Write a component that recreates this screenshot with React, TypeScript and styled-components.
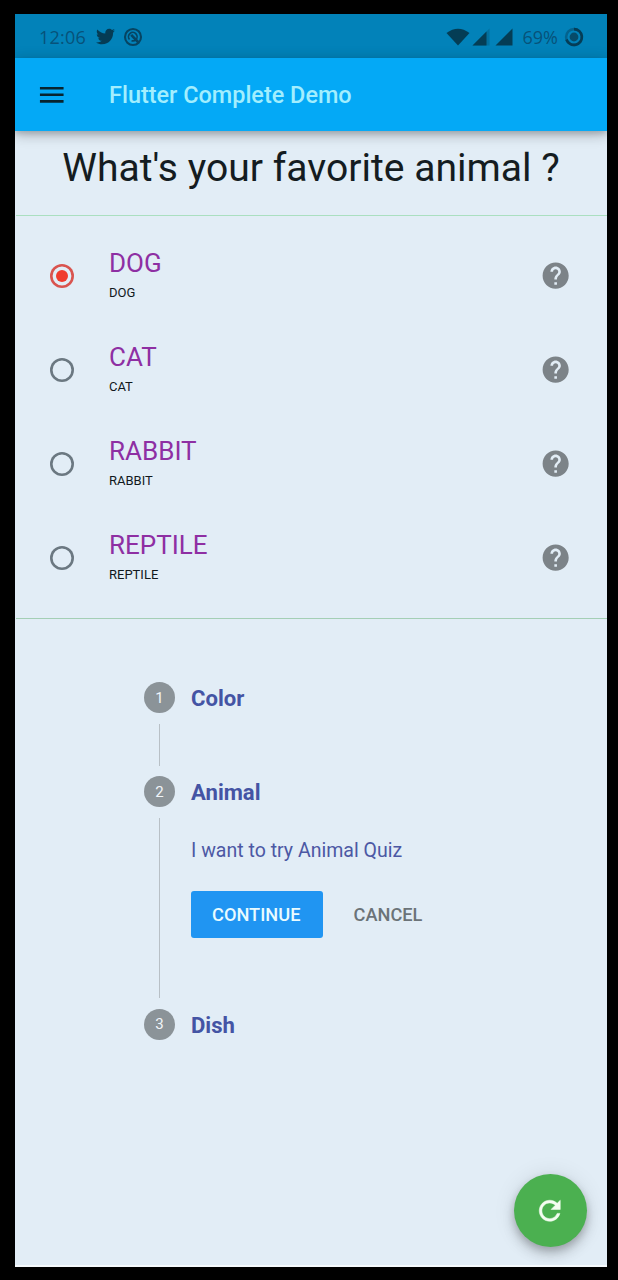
import React from "react";
import styled, { createGlobalStyle } from "styled-components";
import { MdHelp, MdMenu } from "react-icons/md";
import { FaTwitter } from "react-icons/fa";

const GlobalStyle = createGlobalStyle`
  * { box-sizing: border-box; }
  body { margin: 0; background: #000; font-family: Roboto, "Liberation Sans", sans-serif; }
`;

const Frame = styled.div`
  height: 1280px;
  width: 618px;
  padding: 14px 11px 13px 15px;
  background: #000;
`;

const Screen = styled.div`
  position: relative;
  display: flex;
  flex-direction: column;
  height: 1253px;
  background: #e2edf6;
  overflow: hidden;
  border-bottom: 2px solid #f6fafd;
`;

const StatusBar = styled.div`
  display: flex;
  align-items: center;
  justify-content: space-between;
  flex: none;
  height: 44px;
  padding: 1px 23px 0 24px;
  background: #0282b9;
  color: #053c55;
`;

const StatusGroup = styled.div`
  display: flex;
  align-items: center;
`;

const StatusText = styled.span<{ $spacing: number; $after: number }>`
  margin: 0 ${(p) => p.$after}px 0 0;
  font-family: "Open Sans", "Noto Sans", sans-serif;
  font-weight: 400;
  font-size: 18px;
  line-height: 22px;
  letter-spacing: ${(p) => p.$spacing}px;
  color: #07527a;
`;

const StatusIcon = styled.span<{ $after?: number }>`
  display: flex;
  margin-right: ${(p) => p.$after ?? 0}px;
`;

const AppBar = styled.header`
  display: flex;
  align-items: center;
  flex: none;
  height: 73px;
  padding-left: 21px;
  gap: 41.5px;
  background: #04a9f6;
  box-shadow: 0 3px 5px rgba(0, 0, 0, 0.14), 0 5px 13px rgba(0, 0, 0, 0.14),
    0 1px 14px rgba(0, 0, 0, 0.12);
  z-index: 1;
`;

const AppTitle = styled.h1`
  margin: 1px 0 0;
  font-size: 23.45px;
  font-weight: 500;
  line-height: 28px;
  color: #a2eefe;
  white-space: nowrap;
`;

const Question = styled.h2`
  flex: none;
  margin: 0;
  height: 84px;
  padding-top: 14px;
  font-size: 39.1px;
  font-weight: 400;
  line-height: 46px;
  text-align: center;
  white-space: nowrap;
  color: #141c21;
`;

const Divider = styled.hr<{ $color: string }>`
  flex: none;
  height: 1px;
  margin: 0 0 0 1px;
  border: 0;
  background: ${(p) => p.$color};
`;

const Options = styled.div`
  flex: none;
  padding: 13px 0;
`;

const Option = styled.div`
  display: flex;
  align-items: center;
  height: 94px;
  padding: 0 36px 0 35px;
`;

const Radio = styled.span<{ $on?: boolean }>`
  display: flex;
  align-items: center;
  justify-content: center;
  width: 24px;
  height: 24px;
  margin-right: 35px;
  box-shadow: inset 0 0 0 2.6px ${(p) => (p.$on ? "#d9544f" : "#6b7881")};
  border-radius: 50%;
  &::after {
    content: "";
    width: 12px;
    height: 12px;
    border-radius: 50%;
    background: ${(p) => (p.$on ? "#f03c2e" : "transparent")};
  }
`;

const OptionText = styled.div`
  flex: 1;
  padding-bottom: 3px;
`;

const OptionName = styled.div`
  font-size: 26px;
  line-height: 31px;
  color: #8e2fa3;
`;

const OptionNote = styled.div`
  margin-top: 6px;
  font-size: 13px;
  line-height: 16px;
  color: #11181c;
`;

const Stepper = styled.div`
  display: grid;
  grid-template-columns: 31px 1fr;
  column-gap: 16px;
  padding: 63px 0 0 129px;
`;

const Rail = styled.div`
  display: flex;
  flex-direction: column;
  align-items: center;
`;

const Badge = styled.span`
  display: flex;
  align-items: center;
  justify-content: center;
  flex: none;
  width: 31px;
  height: 31px;
  border-radius: 50%;
  background: #8b9398;
  color: #f1f5f8;
  font-size: 15px;
`;

const Line = styled.span`
  flex: 1;
  width: 1.3px;
  margin: 10.5px 0;
  background: #b8c0c6;
`;

const Step = styled.div<{ $height: number }>`
  height: ${(p) => p.$height}px;
`;

const StepTitle = styled.div`
  padding-top: 1px;
  font-size: 22.1px;
  font-weight: 700;
  line-height: 31px;
  color: #4454a4;
`;

const StepBody = styled.div`
  margin-top: 31px;
  font-size: 19.55px;
  line-height: 24px;
  color: #4c58a4;
`;

const Actions = styled.div`
  display: flex;
  gap: 10px;
  margin-top: 28px;
`;

const Button = styled.button<{ $primary?: boolean }>`
  width: ${(p) => (p.$primary ? 131.5 : 111)}px;
  height: 47px;
  padding: 0 ${(p) => (p.$primary ? 1 : 0)}px 0 0;
  border: 0;
  border-radius: 3px;
  background: ${(p) => (p.$primary ? "#2095f2" : "transparent")};
  color: ${(p) => (p.$primary ? "#e9fbff" : "#6b7378")};
  font: 500 18.2px Roboto, sans-serif;
`;

const Fab = styled.button`
  position: absolute;
  right: 20.5px;
  bottom: 18px;
  display: flex;
  align-items: center;
  justify-content: center;
  width: 73px;
  height: 73px;
  padding: 0;
  border: 0;
  border-radius: 50%;
  background: #4bb050;
  color: #f4fdf1;
  box-shadow: 0 4px 7px rgba(0, 0, 0, 0.16), 0 8px 13px rgba(0, 0, 0, 0.14),
    0 1px 22px rgba(0, 0, 0, 0.1);
`;

const animals = ["DOG", "CAT", "RABBIT", "REPTILE"];

const SearchRing = () => (
  <svg width="20" height="20" viewBox="0 0 20 20" fill="none" stroke="#064462" strokeWidth="2.1">
    <circle cx="10" cy="10" r="8" />
    <path d="M6.500 12.500A4.300 4.300 0 1 1 12.800 12.800A4.300 4.300 0 0 1 8.500 13.700" strokeWidth="1.700" />
    <path d="M8.200 7.800 15.500 15.500" strokeWidth="2.600" />
  </svg>
);

const Wifi = () => (
  <svg width="24" height="18" viewBox="0 0 24 18" fill="#043d55">
    <path d="M.5 5Q12-3.500 23.500 5L12 17.500Z" />
  </svg>
);

const Signal = ({ weak }: { weak?: boolean }) => (
  <svg width="18" height="18" viewBox="0 0 18 18" fill="#043d55">
    <path d="M.5 17.500 17.500.5V17.500Z" opacity={weak ? 0.25 : 1} />
    {weak && <path d="M.5 17.500 14.500 3.500V17.500Z" />}
  </svg>
);

const Battery = () => (
  <svg width="20" height="20" viewBox="0 0 20 20" fill="none">
    <circle cx="10" cy="10" r="7.900" stroke="#054b6b" strokeWidth="2.600" opacity=".55" />
    <path d="M10 2.100A7.900 7.900 0 1 1 2.500 12.500" stroke="#053d56" strokeWidth="2.600" />
    <circle cx="10" cy="10" r="4.400" fill="#064b69" />
  </svg>
);

const Refresh = () => (
  <svg width="31.5" height="31.5" viewBox="0 0 24 24" fill="currentColor">
    <path
      d="M17.65 6.35C16.2 4.9 14.21 4 12 4c-4.42 0-7.99 3.58-7.99 8s3.57 8 7.99 8c3.73 0 6.84-2.55 7.73-6h-2.08c-.82 2.33-3.04 4-5.65 4-3.31 0-6-2.69-6-6s2.69-6 6-6c1.66 0 3.14.69 4.22 1.78L13 11h7V4l-2.35 2.35z"
      stroke="currentColor"
      strokeWidth=".4"
    />
  </svg>
);

export default function App() {
  return (
    <Frame>
      <GlobalStyle />
      <Screen>
        <StatusBar>
          <StatusGroup>
            <StatusText $spacing={0.2} $after={10}>12:06</StatusText>
            <StatusIcon $after={8}>
              <FaTwitter size={19} />
            </StatusIcon>
            <StatusIcon>
              <SearchRing />
            </StatusIcon>
          </StatusGroup>
          <StatusGroup>
            <StatusIcon $after={2}>
              <Wifi />
            </StatusIcon>
            <StatusIcon $after={5}>
              <Signal weak />
            </StatusIcon>
            <StatusIcon $after={10}>
              <Signal />
            </StatusIcon>
            <StatusText $spacing={0} $after={6}>69%</StatusText>
            <StatusIcon>
              <Battery />
            </StatusIcon>
          </StatusGroup>
        </StatusBar>
        <AppBar>
          <MdMenu size={31.5} color="#08242f" />
          <AppTitle>Flutter Complete Demo</AppTitle>
        </AppBar>
        <Question>What's your favorite animal ?</Question>
        <Divider $color="#aadfc0" />
        <Options>
          {animals.map((name, i) => (
            <Option key={name}>
              <Radio $on={i === 0} />
              <OptionText>
                <OptionName>{name}</OptionName>
                <OptionNote>{name}</OptionNote>
              </OptionText>
              <MdHelp size={31.3} color="#7c8388" />
            </Option>
          ))}
        </Options>
        <Divider $color="#a4cfb5" />
        <Stepper>
          <Rail>
            <Badge>1</Badge>
            <Line />
          </Rail>
          <Step $height={94}>
            <StepTitle>Color</StepTitle>
          </Step>
          <Rail>
            <Badge>2</Badge>
            <Line />
          </Rail>
          <Step $height={232.5}>
            <StepTitle>Animal</StepTitle>
            <StepBody>I want to try Animal Quiz</StepBody>
            <Actions>
              <Button $primary>CONTINUE</Button>
              <Button>CANCEL</Button>
            </Actions>
          </Step>
          <Rail>
            <Badge>3</Badge>
          </Rail>
          <Step $height={31}>
            <StepTitle>Dish</StepTitle>
          </Step>
        </Stepper>
        <Fab aria-label="Refresh">
          <Refresh />
        </Fab>
      </Screen>
    </Frame>
  );
}
